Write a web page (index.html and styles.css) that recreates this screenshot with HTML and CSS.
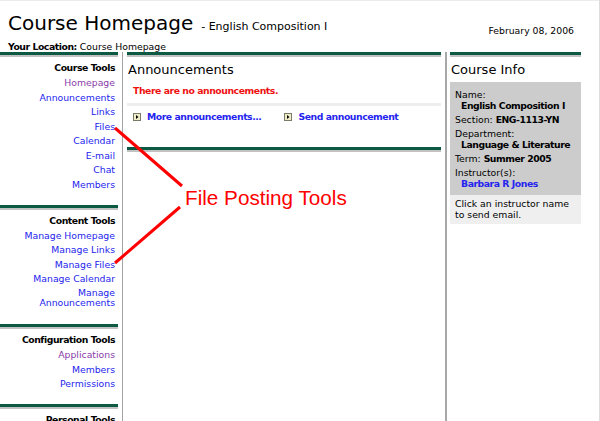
FILE: index.html
```html
<!DOCTYPE html>
<html lang="en">
<head>
    <meta charset="UTF-8">
    <meta name="viewport" content="width=device-width, initial-scale=1.0">
    <title>Course Homepage</title>
    <link rel="stylesheet" href="styles.css">
</head>
<body>
    <div class="page">
        <div class="header">
            <div class="header-left">
                <h1>Course Homepage<span class="course-name">- English Composition I</span></h1>
                <div class="location"><b>Your Location:</b> Course Homepage</div>
            </div>
            <div class="date">February 08, 2006</div>
        </div>

        <div class="columns">
            <div class="sidebar">
                <div class="tool-group">
                    <div class="bar"></div>
                    <h3>Course Tools</h3>
                    <ul>
                        <li><a href="#" class="visited">Homepage</a></li>
                        <li><a href="#">Announcements</a></li>
                        <li><a href="#">Links</a></li>
                        <li><a href="#">Files</a></li>
                        <li><a href="#">Calendar</a></li>
                        <li><a href="#">E-mail</a></li>
                        <li><a href="#">Chat</a></li>
                        <li><a href="#">Members</a></li>
                    </ul>
                </div>
                <div class="tool-group">
                    <div class="bar"></div>
                    <h3>Content Tools</h3>
                    <ul>
                        <li><a href="#">Manage Homepage</a></li>
                        <li><a href="#">Manage Links</a></li>
                        <li><a href="#">Manage Files</a></li>
                        <li><a href="#">Manage Calendar</a></li>
                        <li class="wrap"><a href="#">Manage<br>Announcements</a></li>
                    </ul>
                </div>
                <div class="tool-group">
                    <div class="bar"></div>
                    <h3>Configuration Tools</h3>
                    <ul>
                        <li><a href="#" class="visited">Applications</a></li>
                        <li><a href="#">Members</a></li>
                        <li><a href="#">Permissions</a></li>
                    </ul>
                </div>
                <div class="tool-group">
                    <div class="bar"></div>
                    <h3>Personal Tools</h3>
                </div>
            </div>

            <div class="vrule"></div>

            <div class="main">
                <div class="bar"></div>
                <h2>Announcements</h2>
                <p class="empty">There are no announcements.</p>
                <div class="separator"></div>
                <div class="actions">
                    <a href="#" class="action">
                        <svg class="bullet" width="8" height="8" viewBox="0 0 8 8"><rect x="0.5" y="0.5" width="7" height="7" fill="#efedc8" stroke="#7a7a6a"/><path d="M3 2 L5.5 4 L3 6 Z" fill="#000"/></svg>
                        More announcements...
                    </a>
                    <a href="#" class="action">
                        <svg class="bullet" width="8" height="8" viewBox="0 0 8 8"><rect x="0.5" y="0.5" width="7" height="7" fill="#efedc8" stroke="#7a7a6a"/><path d="M3 2 L5.5 4 L3 6 Z" fill="#000"/></svg>
                        Send announcement
                    </a>
                </div>
                <div class="bar bottom"></div>
            </div>

            <div class="vrule thick"></div>

            <div class="info">
                <div class="bar"></div>
                <h2>Course Info</h2>
                <div class="info-box">
                    <div class="field">Name:<div class="value">English Composition I</div></div>
                    <div class="field">Section: <b>ENG-1113-YN</b></div>
                    <div class="field">Department:<div class="value">Language &amp; Literature</div></div>
                    <div class="field">Term: <b>Summer 2005</b></div>
                    <div class="field">Instructor(s):<div class="value"><a href="#">Barbara R Jones</a></div></div>
                </div>
                <div class="info-hint">Click an instructor name to send email.</div>
            </div>
        </div>

        <!-- annotation drawn over the screenshot -->
        <svg class="callout-lines" width="600" height="421" viewBox="0 0 600 421">
            <line x1="115" y1="128" x2="182" y2="186" stroke="#ff0000" stroke-width="3"/>
            <line x1="180" y1="207" x2="115" y2="263" stroke="#ff0000" stroke-width="3"/>
        </svg>
        <div class="callout-text">File Posting Tools</div>
    </div>
</body>
</html>
```

FILE: styles.css
```css
body {
    margin: 0;
    font-family: "DejaVu Sans", Verdana, sans-serif;
    font-size: 9.3px;
    color: #000;
    background-color: #fff;
}
.page {
    position: relative;
    width: 600px;
    height: 421px;
    overflow: hidden;
    box-shadow: inset -1px 0 #dcdcdc, inset 0 1px #ececec;
}
a {
    color: #2424ee;
    text-decoration: none;
}
a.visited {
    color: #8a3ca8;
}
b,
h3 {
    letter-spacing: -0.45px;
}

/* header */
.header {
    display: flex;
    justify-content: space-between;
    height: 52px;
    box-sizing: border-box;
    padding: 11px 26px 0 8px;
}
h1 {
    margin: 0;
    font-size: 20px;
    font-weight: normal;
    line-height: 24px;
}
.course-name {
    font-size: 11px;
    margin-left: 8px;
}
.location {
    margin-top: 2px;
    line-height: 12px;
}
.date {
    margin-top: 14px;
    line-height: 12px;
}

/* columns */
.columns {
    display: flex;
    height: 369px;
}
.bar {
    height: 3px;
    background-color: #0d5a44;
    border-bottom: 2px solid #c2c2c2;
}
.vrule {
    width: 1px;
    margin: 0 4px;
    background-color: #a3a3a3;
}
.vrule.thick {
    width: 2px;
    margin: 0 3px 0 4px;
    background-color: #a8a8a8;
}

/* left tools */
.sidebar {
    width: 118px;
    text-align: right;
}
.tool-group {
    padding-bottom: 13.5px;
}
.tool-group h3 {
    margin: 3.75px 0 0;
    padding: 1.25px 3px 1.25px 0;
    font-size: 9.3px;
    line-height: 12px;
}
.tool-group ul {
    list-style: none;
    margin: 0;
    padding: 0 3px 0 0;
}
.tool-group li {
    padding: 1.75px 0;
    line-height: 11px;
}
.tool-group li.wrap {
    padding: 2.25px 0;
    line-height: 10px;
}

/* announcements */
.main {
    width: 314px;
}
.main h2,
.info h2 {
    margin: 5px 0 0;
    padding-left: 1px;
    font-size: 13px;
    font-weight: normal;
    line-height: 16px;
}
.empty {
    margin: 7px 0 0;
    padding-left: 6px;
    color: #ee1111;
    font-weight: bold;
    letter-spacing: -0.45px;
    line-height: 12px;
}
.separator {
    height: 3px;
    margin-top: 6px;
    background-color: #eeeeee;
}
.actions {
    display: flex;
    gap: 23px;
    margin-top: 5px;
    padding-left: 6px;
    line-height: 12px;
}
.action {
    display: flex;
    align-items: center;
    font-weight: bold;
    letter-spacing: -0.45px;
}
.bullet {
    margin-right: 6px;
}
.bar.bottom {
    margin-top: 24px;
}

/* course info */
.info {
    width: 131px;
}
.info h2 {
    margin-bottom: 4px;
}
.info-box {
    background-color: #cccccc;
    padding: 6.5px 5px;
    line-height: 11px;
}
.field {
    margin-bottom: 3px;
}
.field:last-child {
    margin-bottom: 0;
}
.value {
    padding-left: 6px;
    font-weight: bold;
    letter-spacing: -0.45px;
    white-space: nowrap;
}
.info-hint {
    background-color: #efefef;
    padding: 3px 5px 3.5px;
    line-height: 11px;
}

/* red annotation */
.callout-lines {
    position: absolute;
    left: 0;
    top: 0;
    pointer-events: none;
}
.callout-text {
    position: absolute;
    left: 185px;
    top: 186px;
    font-family: "Liberation Sans", Arial, sans-serif;
    font-size: 20.7px;
    line-height: 24px;
    color: #ff0000;
    white-space: nowrap;
}
```
